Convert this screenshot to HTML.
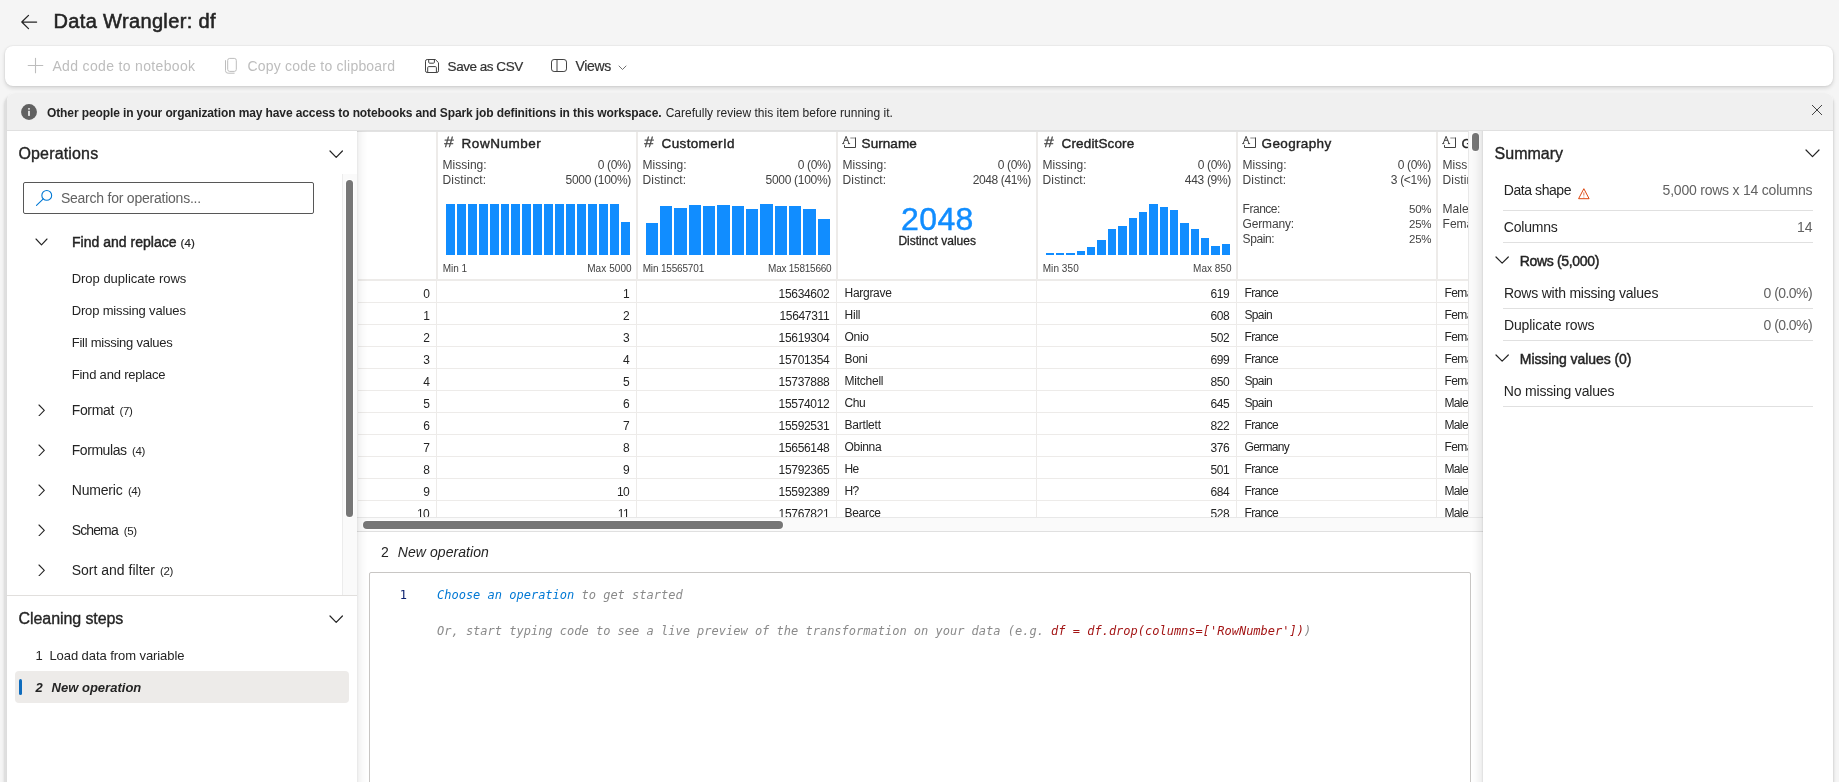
<!DOCTYPE html>
<html lang="en"><head><meta charset="utf-8"><title>Data Wrangler: df</title>
<style>
html,body{margin:0;padding:0;}
body{width:1839px;height:782px;overflow:hidden;background:#f5f5f5;position:relative;
font-family:"Liberation Sans",sans-serif;-webkit-font-smoothing:antialiased;}
.g{position:absolute;left:0;top:0;width:0;height:0;display:block;}
.b{position:absolute;display:block;box-sizing:border-box;}
.t{position:absolute;white-space:nowrap;line-height:1;display:block;}
</style></head><body>
<div class="b" style="left:0;top:0;width:1839px;height:782px;overflow:hidden;will-change:transform;">

<header class="g" aria-label="Data Wrangler header, toolbar and notice">
<svg class="b" style="left:19px;top:12px;" width="20" height="20" viewBox="0 0 20 20"><path d="M17.6 10 H2.9 M9.5 3.4 L2.8 10 L9.5 16.6" fill="none" stroke="#242424" stroke-width="1.25" stroke-linecap="round" stroke-linejoin="round"/></svg>
<span class="t" style="top:11px;font-size:20px;color:#242424;left:53.50px;letter-spacing:0.352px;-webkit-text-stroke:0.55px #242424;">Data Wrangler: df</span>
<div class="b" style="left:5px;top:46px;width:1828px;height:40px;background:#ffffff;border-radius:8px;box-shadow:0 0 2px rgba(0,0,0,.12),0 2px 4px rgba(0,0,0,.14);"></div>
<svg class="b" style="left:27px;top:57px;" width="17" height="17" viewBox="0 0 17 17"><path d="M8.5 1.2 V15.8 M1.2 8.5 H15.8" fill="none" stroke="#bdbdbd" stroke-width="1.1" stroke-linecap="round"/></svg>
<span class="t" style="top:59px;font-size:14px;color:#bdbdbd;left:52.40px;letter-spacing:0.341px;">Add code to notebook</span>
<svg class="b" style="left:224px;top:57px;" width="15" height="18" viewBox="0 0 15 18"><rect x="3.7" y="1.4" width="8.6" height="13" rx="2" fill="none" stroke="#bdbdbd" stroke-width="1"/><path d="M1.5 3.6 V13.6 a2.6 2.6 0 0 0 2.6 2.6 H10.2" fill="none" stroke="#bdbdbd" stroke-width="1" stroke-linecap="round"/></svg>
<span class="t" style="top:59px;font-size:14px;color:#bdbdbd;left:247.50px;letter-spacing:0.205px;">Copy code to clipboard</span>
<svg class="b" style="left:424px;top:58px;" width="16" height="16" viewBox="0 0 16 16"><path d="M1.5 3.2 a1.7 1.7 0 0 1 1.7 -1.7 H11.3 L14.5 4.7 V12.8 a1.7 1.7 0 0 1 -1.7 1.7 H3.2 a1.7 1.7 0 0 1 -1.7 -1.7 Z" fill="none" stroke="#424242" stroke-width="1" stroke-linejoin="round"/><path d="M4.7 1.5 V4.2 a1 1 0 0 0 1 1 H9.4 a1 1 0 0 0 1 -1 V1.5" fill="none" stroke="#424242" stroke-width="1"/><path d="M3.7 14.5 V9.6 a1 1 0 0 1 1 -1 H11.4 a1 1 0 0 1 1 1 V14.5" fill="none" stroke="#424242" stroke-width="1"/></svg>
<span class="t" style="top:60px;font-size:13.5px;color:#333333;left:447.60px;letter-spacing:-0.469px;-webkit-text-stroke:0.2px #333333;">Save as CSV</span>
<svg class="b" style="left:550px;top:58px;" width="18" height="16" viewBox="0 0 18 16"><rect x="1.5" y="1.5" width="15" height="12" rx="2.6" fill="none" stroke="#424242" stroke-width="1"/><path d="M7 1.6 V13.4" stroke="#424242" stroke-width="1"/></svg>
<span class="t" style="top:59px;font-size:14px;color:#333333;left:575.60px;letter-spacing:-0.373px;-webkit-text-stroke:0.2px #333333;">Views</span>
<svg class="b" style="left:617.5px;top:64.5px;" width="9" height="5.5" viewBox="0 0 9 5.5"><path d="M1 1 L4.5 4.5 L8 1" fill="none" stroke="#616161" stroke-width="0.9" stroke-linecap="round" stroke-linejoin="round"/></svg>
<div class="b" style="left:4px;top:95px;width:1830px;height:700px;background:#dfdfdf;border-radius:10px 9px 0 0;box-shadow:0 0 3px rgba(0,0,0,.13);"></div>
<div class="b" style="left:7px;top:93px;width:1826px;height:700px;background:#ffffff;border-radius:8px 8px 0 0;box-shadow:0 0 2px rgba(0,0,0,.03);"></div>
<div class="b" style="left:7px;top:93px;width:1826px;height:38px;background:#f0f0f0;border-radius:8px 8px 0 0;"></div>
<div class="b" style="left:7px;top:130px;width:1826px;height:1px;background:#e0e0e0;"></div>
<svg class="b" style="left:21px;top:104px;" width="16" height="16" viewBox="0 0 16 16"><circle cx="8" cy="8" r="7.95" fill="#616161"/><rect x="7" y="4.1" width="2" height="1.5" fill="#dcdcdc"/><rect x="7" y="6.8" width="2" height="5.1" fill="#dcdcdc"/></svg>
<span class="t" style="top:107px;font-size:12px;color:#242424;left:47.00px;font-weight:bold;letter-spacing:-0.109px;">Other people in your organization may have access to notebooks and Spark job definitions in this workspace.</span>
<span class="t" style="top:107px;font-size:12px;color:#242424;left:665.70px;letter-spacing:0.008px;">Carefully review this item before running it.</span>
<svg class="b" style="left:1811px;top:104px;" width="12" height="12" viewBox="0 0 12 12"><path d="M1.3 1.3 L10.7 10.7 M10.7 1.3 L1.3 10.7" fill="none" stroke="#424242" stroke-width="1" stroke-linecap="round"/></svg>
</header>
<main class="g" aria-label="Data grid">
<div class="b" style="left:357px;top:131px;width:1126px;height:386px;background:#ffffff;"></div>
<div class="b" style="left:358px;top:131px;width:1110px;height:386px;overflow:hidden;">
<div class="b" style="left:0px;top:148px;width:1110px;height:2px;background:#edebe9;"></div>
<div class="b" style="left:0px;top:171px;width:1110px;height:1px;background:#edebe9;"></div>
<div class="b" style="left:0px;top:193px;width:1110px;height:1px;background:#edebe9;"></div>
<div class="b" style="left:0px;top:215px;width:1110px;height:1px;background:#edebe9;"></div>
<div class="b" style="left:0px;top:237px;width:1110px;height:1px;background:#edebe9;"></div>
<div class="b" style="left:0px;top:259px;width:1110px;height:1px;background:#edebe9;"></div>
<div class="b" style="left:0px;top:281px;width:1110px;height:1px;background:#edebe9;"></div>
<div class="b" style="left:0px;top:303px;width:1110px;height:1px;background:#edebe9;"></div>
<div class="b" style="left:0px;top:325px;width:1110px;height:1px;background:#edebe9;"></div>
<div class="b" style="left:0px;top:347px;width:1110px;height:1px;background:#edebe9;"></div>
<div class="b" style="left:0px;top:369px;width:1110px;height:1px;background:#edebe9;"></div>
<div class="b" style="left:0px;top:391px;width:1110px;height:1px;background:#edebe9;"></div>
<div class="b" style="left:78px;top:0px;width:2px;height:150px;background:#edebe9;"></div>
<div class="b" style="left:78px;top:150px;width:1px;height:236px;background:#edebe9;"></div>
<div class="b" style="left:278px;top:0px;width:2px;height:150px;background:#edebe9;"></div>
<div class="b" style="left:278px;top:150px;width:1px;height:236px;background:#edebe9;"></div>
<div class="b" style="left:478px;top:0px;width:2px;height:150px;background:#edebe9;"></div>
<div class="b" style="left:478px;top:150px;width:1px;height:236px;background:#edebe9;"></div>
<div class="b" style="left:678px;top:0px;width:2px;height:150px;background:#edebe9;"></div>
<div class="b" style="left:678px;top:150px;width:1px;height:236px;background:#edebe9;"></div>
<div class="b" style="left:878px;top:0px;width:2px;height:150px;background:#edebe9;"></div>
<div class="b" style="left:878px;top:150px;width:1px;height:236px;background:#edebe9;"></div>
<div class="b" style="left:1078px;top:0px;width:2px;height:150px;background:#edebe9;"></div>
<div class="b" style="left:1078px;top:150px;width:1px;height:236px;background:#edebe9;"></div>
<span class="t" style="top:3px;font-size:15px;color:#424242;left:85.90px;-webkit-text-stroke:0.25px #424242;transform:scaleX(1.12) skewX(-3deg);transform-origin:0 100%;">#</span>
<span class="t" style="top:6px;font-size:13.5px;color:#242424;left:103.60px;letter-spacing:0.522px;-webkit-text-stroke:0.4px #242424;">RowNumber</span>
<span class="t" style="top:28px;font-size:12px;color:#424242;left:84.60px;letter-spacing:-0.001px;">Missing:</span>
<span class="t" style="top:43px;font-size:12px;color:#424242;left:84.60px;letter-spacing:0.103px;">Distinct:</span>
<span class="t" style="top:28px;font-size:12px;color:#424242;left:239.80px;letter-spacing:-0.369px;">0 (0%)</span>
<span class="t" style="top:43px;font-size:12px;color:#424242;left:207.50px;letter-spacing:-0.291px;">5000 (100%)</span>
<span class="t" style="top:3px;font-size:15px;color:#424242;left:285.90px;-webkit-text-stroke:0.25px #424242;transform:scaleX(1.12) skewX(-3deg);transform-origin:0 100%;">#</span>
<span class="t" style="top:6px;font-size:13.5px;color:#242424;left:303.60px;letter-spacing:0.347px;-webkit-text-stroke:0.4px #242424;">CustomerId</span>
<span class="t" style="top:28px;font-size:12px;color:#424242;left:284.60px;letter-spacing:-0.001px;">Missing:</span>
<span class="t" style="top:43px;font-size:12px;color:#424242;left:284.60px;letter-spacing:0.103px;">Distinct:</span>
<span class="t" style="top:28px;font-size:12px;color:#424242;left:439.80px;letter-spacing:-0.369px;">0 (0%)</span>
<span class="t" style="top:43px;font-size:12px;color:#424242;left:407.50px;letter-spacing:-0.291px;">5000 (100%)</span>
<svg class="b" style="left:484px;top:4px;" width="15" height="14" viewBox="0 0 15 14"><path d="M8.3 3 H13.5" fill="none" stroke="#8a8a8a" stroke-width="1"/><path d="M13.5 2.5 V12.5 H2.5 V10.1" fill="none" stroke="#424242" stroke-width="1" stroke-linejoin="miter"/><path d="M1.2 8.5 L4.1 1.3 L7 8.5 M2.4 5.3 H5.8" fill="none" stroke="#424242" stroke-width="1" stroke-linejoin="round" stroke-linecap="round"/><path d="M0.2 8.6 H2.3 M5.9 8.6 H8.1" fill="none" stroke="#424242" stroke-width="0.9"/></svg>
<span class="t" style="top:6px;font-size:13.5px;color:#242424;left:503.60px;letter-spacing:0.054px;-webkit-text-stroke:0.4px #242424;">Surname</span>
<span class="t" style="top:28px;font-size:12px;color:#424242;left:484.60px;letter-spacing:-0.001px;">Missing:</span>
<span class="t" style="top:43px;font-size:12px;color:#424242;left:484.60px;letter-spacing:0.103px;">Distinct:</span>
<span class="t" style="top:28px;font-size:12px;color:#424242;left:639.80px;letter-spacing:-0.369px;">0 (0%)</span>
<span class="t" style="top:43px;font-size:12px;color:#424242;left:614.70px;letter-spacing:-0.382px;">2048 (41%)</span>
<span class="t" style="top:3px;font-size:15px;color:#424242;left:685.90px;-webkit-text-stroke:0.25px #424242;transform:scaleX(1.12) skewX(-3deg);transform-origin:0 100%;">#</span>
<span class="t" style="top:6px;font-size:13.5px;color:#242424;left:703.60px;letter-spacing:0.132px;-webkit-text-stroke:0.4px #242424;">CreditScore</span>
<span class="t" style="top:28px;font-size:12px;color:#424242;left:684.60px;letter-spacing:-0.001px;">Missing:</span>
<span class="t" style="top:43px;font-size:12px;color:#424242;left:684.60px;letter-spacing:0.103px;">Distinct:</span>
<span class="t" style="top:28px;font-size:12px;color:#424242;left:839.80px;letter-spacing:-0.369px;">0 (0%)</span>
<span class="t" style="top:43px;font-size:12px;color:#424242;left:826.80px;letter-spacing:-0.313px;">443 (9%)</span>
<svg class="b" style="left:884px;top:4px;" width="15" height="14" viewBox="0 0 15 14"><path d="M8.3 3 H13.5" fill="none" stroke="#8a8a8a" stroke-width="1"/><path d="M13.5 2.5 V12.5 H2.5 V10.1" fill="none" stroke="#424242" stroke-width="1" stroke-linejoin="miter"/><path d="M1.2 8.5 L4.1 1.3 L7 8.5 M2.4 5.3 H5.8" fill="none" stroke="#424242" stroke-width="1" stroke-linejoin="round" stroke-linecap="round"/><path d="M0.2 8.6 H2.3 M5.9 8.6 H8.1" fill="none" stroke="#424242" stroke-width="0.9"/></svg>
<span class="t" style="top:6px;font-size:13.5px;color:#242424;left:903.60px;letter-spacing:0.351px;-webkit-text-stroke:0.4px #242424;">Geography</span>
<span class="t" style="top:28px;font-size:12px;color:#424242;left:884.60px;letter-spacing:-0.001px;">Missing:</span>
<span class="t" style="top:43px;font-size:12px;color:#424242;left:884.60px;letter-spacing:0.103px;">Distinct:</span>
<span class="t" style="top:28px;font-size:12px;color:#424242;left:1039.80px;letter-spacing:-0.369px;">0 (0%)</span>
<span class="t" style="top:43px;font-size:12px;color:#424242;left:1032.80px;letter-spacing:-0.309px;">3 (&lt;1%)</span>
<svg class="b" style="left:1084px;top:4px;" width="15" height="14" viewBox="0 0 15 14"><path d="M8.3 3 H13.5" fill="none" stroke="#8a8a8a" stroke-width="1"/><path d="M13.5 2.5 V12.5 H2.5 V10.1" fill="none" stroke="#424242" stroke-width="1" stroke-linejoin="miter"/><path d="M1.2 8.5 L4.1 1.3 L7 8.5 M2.4 5.3 H5.8" fill="none" stroke="#424242" stroke-width="1" stroke-linejoin="round" stroke-linecap="round"/><path d="M0.2 8.6 H2.3 M5.9 8.6 H8.1" fill="none" stroke="#424242" stroke-width="0.9"/></svg>
<span class="t" style="top:6px;font-size:13.5px;color:#242424;left:1103.60px;letter-spacing:0.394px;-webkit-text-stroke:0.4px #242424;">Gender</span>
<span class="t" style="top:28px;font-size:12px;color:#424242;left:1084.60px;letter-spacing:-0.001px;">Missing:</span>
<span class="t" style="top:43px;font-size:12px;color:#424242;left:1084.60px;letter-spacing:0.103px;">Distinct:</span>
<span class="t" style="top:28px;font-size:12px;color:#424242;left:1239.80px;letter-spacing:-0.369px;">0 (0%)</span>
<span class="t" style="top:43px;font-size:12px;color:#424242;left:1230.95px;">2 (&lt;1%)</span>
<svg class="b" style="left:88px;top:73px;" width="184" height="51" viewBox="0 0 184 51"><g fill="#118dff" shape-rendering="crispEdges"><rect x="0" y="0" width="9" height="51"/><rect x="11" y="0" width="9" height="51"/><rect x="22" y="0" width="9" height="51"/><rect x="33" y="0" width="9" height="51"/><rect x="44" y="0" width="9" height="51"/><rect x="55" y="0" width="8" height="51"/><rect x="65" y="0" width="9" height="51"/><rect x="76" y="0" width="9" height="51"/><rect x="87" y="0" width="9" height="51"/><rect x="98" y="0" width="9" height="51"/><rect x="109" y="0" width="9" height="51"/><rect x="120" y="0" width="9" height="51"/><rect x="131" y="0" width="9" height="51"/><rect x="142" y="0" width="9" height="51"/><rect x="153" y="0" width="9" height="51"/><rect x="164" y="0" width="9" height="51"/><rect x="175" y="18" width="9" height="33"/></g></svg>
<svg class="b" style="left:288px;top:73px;" width="184" height="51" viewBox="0 0 184 51"><g fill="#118dff" shape-rendering="crispEdges"><rect x="0" y="19" width="12" height="32"/><rect x="14" y="2" width="12" height="49"/><rect x="28" y="4" width="13" height="47"/><rect x="43" y="1" width="12" height="50"/><rect x="57" y="2" width="12" height="49"/><rect x="71" y="1" width="13" height="50"/><rect x="86" y="2" width="12" height="49"/><rect x="100" y="5" width="12" height="46"/><rect x="114" y="0" width="13" height="51"/><rect x="129" y="2" width="12" height="49"/><rect x="143" y="2" width="12" height="49"/><rect x="157" y="5" width="13" height="46"/><rect x="172" y="15" width="12" height="36"/></g></svg>
<svg class="b" style="left:688px;top:73px;" width="184" height="51" viewBox="0 0 184 51"><g fill="#118dff" shape-rendering="crispEdges"><rect x="0" y="49" width="8" height="2"/><rect x="10" y="49" width="8" height="2"/><rect x="20" y="49" width="9" height="2"/><rect x="31" y="47" width="8" height="4"/><rect x="41" y="43" width="8" height="8"/><rect x="51" y="36" width="9" height="15"/><rect x="62" y="25" width="8" height="26"/><rect x="72" y="22" width="9" height="29"/><rect x="83" y="14" width="8" height="37"/><rect x="93" y="8" width="8" height="43"/><rect x="103" y="0" width="9" height="51"/><rect x="114" y="3" width="8" height="48"/><rect x="124" y="6" width="8" height="45"/><rect x="134" y="19" width="9" height="32"/><rect x="145" y="25" width="8" height="26"/><rect x="155" y="34" width="8" height="17"/><rect x="165" y="42" width="9" height="9"/><rect x="176" y="40" width="8" height="11"/></g></svg>
<span class="t" style="top:133px;font-size:10px;color:#424242;left:84.70px;letter-spacing:-0.013px;">Min 1</span>
<span class="t" style="top:133px;font-size:10px;color:#424242;left:229.20px;letter-spacing:0.069px;">Max 5000</span>
<span class="t" style="top:133px;font-size:10px;color:#424242;left:284.70px;letter-spacing:-0.171px;">Min 15565701</span>
<span class="t" style="top:133px;font-size:10px;color:#424242;left:410.10px;letter-spacing:-0.242px;">Max 15815660</span>
<span class="t" style="top:133px;font-size:10px;color:#424242;left:684.70px;letter-spacing:0.071px;">Min 350</span>
<span class="t" style="top:133px;font-size:10px;color:#424242;left:835.10px;letter-spacing:0.024px;">Max 850</span>
<span class="t" style="top:72px;font-size:32px;color:#118dff;left:543.00px;letter-spacing:0.404px;-webkit-text-stroke:0.45px #118dff;">2048</span>
<span class="t" style="top:104px;font-size:12px;color:#242424;left:540.40px;letter-spacing:0.017px;-webkit-text-stroke:0.3px #242424;">Distinct values</span>
<span class="t" style="top:72px;font-size:12px;color:#424242;left:884.60px;letter-spacing:-0.480px;">France:</span>
<span class="t" style="top:73px;font-size:11.5px;color:#424242;left:1051.00px;letter-spacing:-0.258px;">50%</span>
<span class="t" style="top:87px;font-size:12px;color:#424242;left:884.60px;letter-spacing:-0.169px;">Germany:</span>
<span class="t" style="top:88px;font-size:11.5px;color:#424242;left:1051.00px;letter-spacing:-0.258px;">25%</span>
<span class="t" style="top:102px;font-size:12px;color:#424242;left:884.60px;letter-spacing:-0.385px;">Spain:</span>
<span class="t" style="top:103px;font-size:11.5px;color:#424242;left:1051.00px;letter-spacing:-0.258px;">25%</span>
<span class="t" style="top:72px;font-size:12px;color:#424242;left:1084.60px;">Male:</span>
<span class="t" style="top:87px;font-size:12px;color:#424242;left:1084.60px;">Female:</span>
<span class="t" style="top:157px;font-size:12px;color:#242424;left:65.13px;">0</span>
<span class="t" style="top:157px;font-size:12px;color:#242424;left:265.03px;">1</span>
<span class="t" style="top:157px;font-size:12px;color:#242424;left:420.60px;letter-spacing:-0.328px;">15634602</span>
<span class="t" style="top:156px;font-size:12px;color:#242424;left:486.60px;letter-spacing:-0.303px;">Hargrave</span>
<span class="t" style="top:157px;font-size:12px;color:#242424;left:852.54px;letter-spacing:-0.430px;">619</span>
<span class="t" style="top:156px;font-size:12px;color:#242424;left:886.50px;letter-spacing:-0.635px;">France</span>
<span class="t" style="top:156px;font-size:12px;color:#242424;left:1086.40px;letter-spacing:-0.560px;">Female</span>
<span class="t" style="top:179px;font-size:12px;color:#242424;left:65.13px;">1</span>
<span class="t" style="top:179px;font-size:12px;color:#242424;left:265.03px;">2</span>
<span class="t" style="top:179px;font-size:12px;color:#242424;left:421.46px;letter-spacing:-0.323px;">15647311</span>
<span class="t" style="top:178px;font-size:12px;color:#242424;left:486.60px;letter-spacing:-0.239px;">Hill</span>
<span class="t" style="top:179px;font-size:12px;color:#242424;left:852.54px;letter-spacing:-0.430px;">608</span>
<span class="t" style="top:178px;font-size:12px;color:#242424;left:886.50px;letter-spacing:-0.652px;">Spain</span>
<span class="t" style="top:178px;font-size:12px;color:#242424;left:1086.40px;letter-spacing:-0.560px;">Female</span>
<span class="t" style="top:201px;font-size:12px;color:#242424;left:65.13px;">2</span>
<span class="t" style="top:201px;font-size:12px;color:#242424;left:265.03px;">3</span>
<span class="t" style="top:201px;font-size:12px;color:#242424;left:420.60px;letter-spacing:-0.328px;">15619304</span>
<span class="t" style="top:200px;font-size:12px;color:#242424;left:486.60px;letter-spacing:-0.363px;">Onio</span>
<span class="t" style="top:201px;font-size:12px;color:#242424;left:852.54px;letter-spacing:-0.430px;">502</span>
<span class="t" style="top:200px;font-size:12px;color:#242424;left:886.50px;letter-spacing:-0.635px;">France</span>
<span class="t" style="top:200px;font-size:12px;color:#242424;left:1086.40px;letter-spacing:-0.560px;">Female</span>
<span class="t" style="top:223px;font-size:12px;color:#242424;left:65.13px;">3</span>
<span class="t" style="top:223px;font-size:12px;color:#242424;left:265.03px;">4</span>
<span class="t" style="top:223px;font-size:12px;color:#242424;left:420.60px;letter-spacing:-0.328px;">15701354</span>
<span class="t" style="top:222px;font-size:12px;color:#242424;left:486.60px;letter-spacing:-0.344px;">Boni</span>
<span class="t" style="top:223px;font-size:12px;color:#242424;left:852.54px;letter-spacing:-0.430px;">699</span>
<span class="t" style="top:222px;font-size:12px;color:#242424;left:886.50px;letter-spacing:-0.635px;">France</span>
<span class="t" style="top:222px;font-size:12px;color:#242424;left:1086.40px;letter-spacing:-0.560px;">Female</span>
<span class="t" style="top:245px;font-size:12px;color:#242424;left:65.13px;">4</span>
<span class="t" style="top:245px;font-size:12px;color:#242424;left:265.03px;">5</span>
<span class="t" style="top:245px;font-size:12px;color:#242424;left:420.60px;letter-spacing:-0.328px;">15737888</span>
<span class="t" style="top:244px;font-size:12px;color:#242424;left:486.60px;letter-spacing:-0.250px;">Mitchell</span>
<span class="t" style="top:245px;font-size:12px;color:#242424;left:852.54px;letter-spacing:-0.430px;">850</span>
<span class="t" style="top:244px;font-size:12px;color:#242424;left:886.50px;letter-spacing:-0.652px;">Spain</span>
<span class="t" style="top:244px;font-size:12px;color:#242424;left:1086.40px;letter-spacing:-0.560px;">Female</span>
<span class="t" style="top:267px;font-size:12px;color:#242424;left:65.13px;">5</span>
<span class="t" style="top:267px;font-size:12px;color:#242424;left:265.03px;">6</span>
<span class="t" style="top:267px;font-size:12px;color:#242424;left:420.60px;letter-spacing:-0.328px;">15574012</span>
<span class="t" style="top:266px;font-size:12px;color:#242424;left:486.60px;letter-spacing:-0.473px;">Chu</span>
<span class="t" style="top:267px;font-size:12px;color:#242424;left:852.54px;letter-spacing:-0.430px;">645</span>
<span class="t" style="top:266px;font-size:12px;color:#242424;left:886.50px;letter-spacing:-0.652px;">Spain</span>
<span class="t" style="top:266px;font-size:12px;color:#242424;left:1086.40px;letter-spacing:-0.607px;">Male</span>
<span class="t" style="top:289px;font-size:12px;color:#242424;left:65.13px;">6</span>
<span class="t" style="top:289px;font-size:12px;color:#242424;left:265.03px;">7</span>
<span class="t" style="top:289px;font-size:12px;color:#242424;left:420.60px;letter-spacing:-0.328px;">15592531</span>
<span class="t" style="top:288px;font-size:12px;color:#242424;left:486.60px;letter-spacing:-0.234px;">Bartlett</span>
<span class="t" style="top:289px;font-size:12px;color:#242424;left:852.54px;letter-spacing:-0.430px;">822</span>
<span class="t" style="top:288px;font-size:12px;color:#242424;left:886.50px;letter-spacing:-0.635px;">France</span>
<span class="t" style="top:288px;font-size:12px;color:#242424;left:1086.40px;letter-spacing:-0.607px;">Male</span>
<span class="t" style="top:311px;font-size:12px;color:#242424;left:65.13px;">7</span>
<span class="t" style="top:311px;font-size:12px;color:#242424;left:265.03px;">8</span>
<span class="t" style="top:311px;font-size:12px;color:#242424;left:420.60px;letter-spacing:-0.328px;">15656148</span>
<span class="t" style="top:310px;font-size:12px;color:#242424;left:486.60px;letter-spacing:-0.333px;">Obinna</span>
<span class="t" style="top:311px;font-size:12px;color:#242424;left:852.54px;letter-spacing:-0.430px;">376</span>
<span class="t" style="top:310px;font-size:12px;color:#242424;left:886.50px;letter-spacing:-0.699px;">Germany</span>
<span class="t" style="top:310px;font-size:12px;color:#242424;left:1086.40px;letter-spacing:-0.560px;">Female</span>
<span class="t" style="top:333px;font-size:12px;color:#242424;left:65.13px;">8</span>
<span class="t" style="top:333px;font-size:12px;color:#242424;left:265.03px;">9</span>
<span class="t" style="top:333px;font-size:12px;color:#242424;left:420.60px;letter-spacing:-0.328px;">15792365</span>
<span class="t" style="top:332px;font-size:12px;color:#242424;left:486.60px;letter-spacing:-0.660px;">He</span>
<span class="t" style="top:333px;font-size:12px;color:#242424;left:852.54px;letter-spacing:-0.430px;">501</span>
<span class="t" style="top:332px;font-size:12px;color:#242424;left:886.50px;letter-spacing:-0.635px;">France</span>
<span class="t" style="top:332px;font-size:12px;color:#242424;left:1086.40px;letter-spacing:-0.607px;">Male</span>
<span class="t" style="top:355px;font-size:12px;color:#242424;left:65.13px;">9</span>
<span class="t" style="top:355px;font-size:12px;color:#242424;left:258.93px;letter-spacing:-0.574px;">10</span>
<span class="t" style="top:355px;font-size:12px;color:#242424;left:420.60px;letter-spacing:-0.328px;">15592389</span>
<span class="t" style="top:354px;font-size:12px;color:#242424;left:486.60px;letter-spacing:-0.660px;">H?</span>
<span class="t" style="top:355px;font-size:12px;color:#242424;left:852.54px;letter-spacing:-0.430px;">684</span>
<span class="t" style="top:354px;font-size:12px;color:#242424;left:886.50px;letter-spacing:-0.635px;">France</span>
<span class="t" style="top:354px;font-size:12px;color:#242424;left:1086.40px;letter-spacing:-0.607px;">Male</span>
<span class="t" style="top:377px;font-size:12px;color:#242424;left:59.03px;letter-spacing:-0.574px;">10</span>
<span class="t" style="top:377px;font-size:12px;color:#242424;left:259.78px;letter-spacing:-0.536px;">11</span>
<span class="t" style="top:377px;font-size:12px;color:#242424;left:420.60px;letter-spacing:-0.328px;">15767821</span>
<span class="t" style="top:376px;font-size:12px;color:#242424;left:486.60px;letter-spacing:-0.327px;">Bearce</span>
<span class="t" style="top:377px;font-size:12px;color:#242424;left:852.54px;letter-spacing:-0.430px;">528</span>
<span class="t" style="top:376px;font-size:12px;color:#242424;left:886.50px;letter-spacing:-0.635px;">France</span>
<span class="t" style="top:376px;font-size:12px;color:#242424;left:1086.40px;letter-spacing:-0.607px;">Male</span>
</div>
<div class="b" style="left:357px;top:131px;width:1126px;height:1px;background:#e2e2e2;"></div>
<div class="b" style="left:1468px;top:131px;width:15px;height:386px;background:#fafafa;border-left:1px solid #e8e8e8;"></div>
<div class="b" style="left:1472px;top:133px;width:7px;height:18px;background:#777777;border-radius:3.5px;box-shadow:0 0 0 1px #ffffff;"></div>
<div class="b" style="left:357px;top:517px;width:1126px;height:14px;background:#fafafa;border-top:1px solid #e8e8e8;"></div>
<div class="b" style="left:363.2px;top:521px;width:419.7px;height:8px;background:#777777;border-radius:4px;box-shadow:0 0 0 1px #ffffff;"></div>
<div class="b" style="left:357px;top:531px;width:1126px;height:1px;background:#e0e0e0;"></div>
</main>
<section class="g" aria-label="Code editor">
<div class="b" style="left:357px;top:532px;width:1126px;height:250px;background:#ffffff;"></div>
<span class="t" style="top:545px;font-size:14px;color:#242424;left:381.00px;">2</span>
<span class="t" style="top:545px;font-size:14px;color:#242424;left:397.80px;font-style:italic;letter-spacing:0.060px;">New operation</span>
<div class="b" style="left:369px;top:572px;width:1102px;height:215px;background:#ffffff;border:1px solid #c8c6c4;border-radius:2px;"></div>
<span class="t" style="top:589px;font-size:12px;color:#0b216f;left:399.80px;font-family:'DejaVu Sans Mono','Liberation Mono',monospace;">1</span>
<span class="t" style="top:589px;font-size:12px;color:#0078d4;left:437.00px;font-style:italic;font-family:'DejaVu Sans Mono','Liberation Mono',monospace;">Choose an operation</span>
<span class="t" style="top:589px;font-size:12px;color:#8a8a8a;left:581.49px;font-style:italic;font-family:'DejaVu Sans Mono','Liberation Mono',monospace;">to get started</span>
<span class="t" style="top:625px;font-size:12px;color:#8a8a8a;left:437.00px;font-style:italic;font-family:'DejaVu Sans Mono','Liberation Mono',monospace;white-space:pre;">Or, start typing code to see a live preview of the transformation on your data (e.g. </span>
<span class="t" style="top:625px;font-size:12px;color:#a31515;left:1051.09px;font-style:italic;font-family:'DejaVu Sans Mono','Liberation Mono',monospace;">df = df.drop(columns=['RowNumber'])</span>
<span class="t" style="top:625px;font-size:12px;color:#8a8a8a;left:1303.95px;font-style:italic;font-family:'DejaVu Sans Mono','Liberation Mono',monospace;">)</span>
</section>
<aside class="g" aria-label="Operations and cleaning steps">
<div class="b" style="left:7px;top:131px;width:350px;height:651px;background:#ffffff;"></div>
<div class="b" style="left:357px;top:131px;width:11px;height:651px;background:linear-gradient(to right,rgba(0,0,0,.10) 0,rgba(0,0,0,.065) 1px,rgba(0,0,0,.045) 2px,rgba(0,0,0,.03) 4px,rgba(0,0,0,.012) 7px,rgba(0,0,0,0) 11px);"></div>
<span class="t" style="top:146px;font-size:16px;color:#242424;left:18.40px;letter-spacing:0.170px;-webkit-text-stroke:0.35px #242424;">Operations</span>
<svg class="b" style="left:328.9px;top:149.6px;" width="14.4" height="8.3" viewBox="0 0 14.4 8.3"><path d="M1 1 L7.2 7.3 L13.4 1" fill="none" stroke="#242424" stroke-width="1.2" stroke-linecap="round" stroke-linejoin="round"/></svg>
<div class="b" style="left:23px;top:182px;width:291px;height:32px;background:#ffffff;border:1px solid #575757;border-radius:2px;"></div>
<svg class="b" style="left:35px;top:189px;" width="18" height="18" viewBox="0 0 18 18"><circle cx="11.75" cy="6.4" r="4.9" fill="none" stroke="#0078d4" stroke-width="1.1"/><path d="M8.3 9.9 L1.5 16.4" stroke="#0078d4" stroke-width="1.1" stroke-linecap="round"/></svg>
<span class="t" style="top:191px;font-size:14px;color:#616161;left:60.90px;letter-spacing:-0.231px;">Search for operations...</span>
<div class="b" style="left:342px;top:174px;width:15px;height:421px;background:#fafafa;border-left:1px solid #ececec;"></div>
<div class="b" style="left:346px;top:180px;width:7px;height:337px;background:#777777;border-radius:3.5px;box-shadow:0 0 0 1px #ffffff;"></div>
<svg class="b" style="left:34.8px;top:238.3px;" width="13" height="7.8" viewBox="0 0 13 7.8"><path d="M1 1 L6.5 6.8 L12 1" fill="none" stroke="#242424" stroke-width="1.1" stroke-linecap="round" stroke-linejoin="round"/></svg>
<span class="t" style="top:235px;font-size:14px;color:#242424;left:72.00px;letter-spacing:0.014px;-webkit-text-stroke:0.45px #242424;">Find and replace</span>
<span class="t" style="top:238px;font-size:11.5px;color:#242424;left:180.60px;letter-spacing:0.072px;-webkit-text-stroke:0.2px #242424;">(4)</span>
<span class="t" style="top:272px;font-size:13px;color:#242424;left:71.70px;letter-spacing:-0.016px;">Drop duplicate rows</span>
<span class="t" style="top:304px;font-size:13px;color:#242424;left:71.70px;letter-spacing:-0.158px;">Drop missing values</span>
<span class="t" style="top:336px;font-size:13px;color:#242424;left:71.70px;letter-spacing:-0.243px;">Fill missing values</span>
<span class="t" style="top:368px;font-size:13px;color:#242424;left:71.70px;letter-spacing:-0.196px;">Find and replace</span>
<svg class="b" style="left:37.7px;top:403.7px;" width="7.3" height="12.8" viewBox="0 0 7.3 12.8"><path d="M1 1 L6.3 6.4 L1 11.8" fill="none" stroke="#242424" stroke-width="1.1" stroke-linecap="round" stroke-linejoin="round"/></svg>
<span class="t" style="top:403px;font-size:14px;color:#242424;left:71.70px;letter-spacing:-0.328px;">Format</span>
<span class="t" style="top:406px;font-size:11.5px;color:#242424;left:119.50px;letter-spacing:-0.378px;">(7)</span>
<svg class="b" style="left:37.7px;top:443.7px;" width="7.3" height="12.8" viewBox="0 0 7.3 12.8"><path d="M1 1 L6.3 6.4 L1 11.8" fill="none" stroke="#242424" stroke-width="1.1" stroke-linecap="round" stroke-linejoin="round"/></svg>
<span class="t" style="top:443px;font-size:14px;color:#242424;left:71.70px;letter-spacing:-0.435px;">Formulas</span>
<span class="t" style="top:446px;font-size:11.5px;color:#242424;left:132.10px;letter-spacing:-0.378px;">(4)</span>
<svg class="b" style="left:37.7px;top:483.7px;" width="7.3" height="12.8" viewBox="0 0 7.3 12.8"><path d="M1 1 L6.3 6.4 L1 11.8" fill="none" stroke="#242424" stroke-width="1.1" stroke-linecap="round" stroke-linejoin="round"/></svg>
<span class="t" style="top:483px;font-size:14px;color:#242424;left:71.70px;letter-spacing:-0.170px;">Numeric</span>
<span class="t" style="top:486px;font-size:11.5px;color:#242424;left:127.90px;letter-spacing:-0.378px;">(4)</span>
<svg class="b" style="left:37.7px;top:523.7px;" width="7.3" height="12.8" viewBox="0 0 7.3 12.8"><path d="M1 1 L6.3 6.4 L1 11.8" fill="none" stroke="#242424" stroke-width="1.1" stroke-linecap="round" stroke-linejoin="round"/></svg>
<span class="t" style="top:523px;font-size:14px;color:#242424;left:71.70px;letter-spacing:-0.872px;">Schema</span>
<span class="t" style="top:526px;font-size:11.5px;color:#242424;left:123.80px;letter-spacing:-0.378px;">(5)</span>
<svg class="b" style="left:37.7px;top:563.7px;" width="7.3" height="12.8" viewBox="0 0 7.3 12.8"><path d="M1 1 L6.3 6.4 L1 11.8" fill="none" stroke="#242424" stroke-width="1.1" stroke-linecap="round" stroke-linejoin="round"/></svg>
<span class="t" style="top:563px;font-size:14px;color:#242424;left:71.70px;letter-spacing:0.003px;">Sort and filter</span>
<span class="t" style="top:566px;font-size:11.5px;color:#242424;left:160.10px;letter-spacing:-0.378px;">(2)</span>
<div class="b" style="left:7px;top:595px;width:350px;height:1px;background:#e1dfdd;"></div>
<span class="t" style="top:611px;font-size:16px;color:#242424;left:18.60px;letter-spacing:-0.088px;-webkit-text-stroke:0.35px #242424;">Cleaning steps</span>
<svg class="b" style="left:328.9px;top:614.7px;" width="14.4" height="8.3" viewBox="0 0 14.4 8.3"><path d="M1 1 L7.2 7.3 L13.4 1" fill="none" stroke="#242424" stroke-width="1.2" stroke-linecap="round" stroke-linejoin="round"/></svg>
<span class="t" style="top:649px;font-size:13px;color:#242424;left:35.40px;">1</span>
<span class="t" style="top:649px;font-size:13px;color:#242424;left:49.40px;letter-spacing:-0.067px;">Load data from variable</span>
<div class="b" style="left:15.3px;top:671px;width:334px;height:32px;background:#edebe9;border-radius:4px;"></div>
<div class="b" style="left:19px;top:679px;width:3px;height:16px;background:#0f6cbd;border-radius:1.5px;"></div>
<span class="t" style="top:681px;font-size:13px;color:#242424;left:35.40px;font-weight:bold;font-style:italic;">2</span>
<span class="t" style="top:681px;font-size:13px;color:#242424;left:51.50px;font-weight:bold;font-style:italic;letter-spacing:0.020px;">New operation</span>
</aside>
<aside class="g" aria-label="Summary">
<div class="b" style="left:1483px;top:131px;width:350px;height:651px;background:#ffffff;"></div>
<div class="b" style="left:1471px;top:131px;width:12px;height:651px;background:linear-gradient(to left,rgba(0,0,0,.14) 0,rgba(0,0,0,.075) 1px,rgba(0,0,0,.055) 2px,rgba(0,0,0,.035) 5px,rgba(0,0,0,.012) 8px,rgba(0,0,0,0) 12px);"></div>
<span class="t" style="top:146px;font-size:16px;color:#242424;left:1494.60px;letter-spacing:-0.009px;-webkit-text-stroke:0.35px #242424;">Summary</span>
<svg class="b" style="left:1804.5px;top:149.3px;" width="15" height="8.6" viewBox="0 0 15 8.6"><path d="M1 1 L7.5 7.6 L14 1" fill="none" stroke="#242424" stroke-width="1.2" stroke-linecap="round" stroke-linejoin="round"/></svg>
<span class="t" style="top:183px;font-size:14px;color:#242424;left:1503.80px;letter-spacing:-0.434px;">Data shape</span>
<svg class="b" style="left:1577px;top:187px;" width="14" height="13" viewBox="0 0 14 13"><path d="M6.85 1.7 L12.1 11.7 H1.6 Z" fill="none" stroke="#da3b01" stroke-width="0.95" stroke-linejoin="round"/><path d="M6.85 5.4 V8.6" stroke="#da3b01" stroke-width="0.9" stroke-opacity="0.75"/><circle cx="6.85" cy="10" r="0.5" fill="#da3b01" fill-opacity="0.75"/></svg>
<span class="t" style="top:183px;font-size:14px;color:#616161;left:1662.60px;letter-spacing:-0.221px;">5,000 rows x 14 columns</span>
<div class="b" style="left:1503px;top:210px;width:310px;height:1px;background:#e0e0e0;"></div>
<span class="t" style="top:220px;font-size:14px;color:#242424;left:1503.80px;letter-spacing:-0.207px;">Columns</span>
<span class="t" style="top:220px;font-size:14px;color:#616161;left:1797.03px;">14</span>
<div class="b" style="left:1503px;top:242px;width:310px;height:1px;background:#e0e0e0;"></div>
<svg class="b" style="left:1495px;top:255.8px;" width="14.3" height="8.1" viewBox="0 0 14.3 8.1"><path d="M1 1 L7.15 7.1 L13.3 1" fill="none" stroke="#242424" stroke-width="1.2" stroke-linecap="round" stroke-linejoin="round"/></svg>
<span class="t" style="top:254px;font-size:14px;color:#242424;left:1519.80px;letter-spacing:-0.341px;-webkit-text-stroke:0.45px #242424;">Rows (5,000)</span>
<span class="t" style="top:286px;font-size:14px;color:#242424;left:1503.90px;letter-spacing:-0.217px;">Rows with missing values</span>
<span class="t" style="top:286px;font-size:14px;color:#616161;left:1763.60px;letter-spacing:-0.559px;">0 (0.0%)</span>
<div class="b" style="left:1503px;top:308px;width:310px;height:1px;background:#e0e0e0;"></div>
<span class="t" style="top:318px;font-size:14px;color:#242424;left:1503.90px;letter-spacing:-0.101px;">Duplicate rows</span>
<span class="t" style="top:318px;font-size:14px;color:#616161;left:1763.60px;letter-spacing:-0.559px;">0 (0.0%)</span>
<div class="b" style="left:1503px;top:340px;width:310px;height:1px;background:#e0e0e0;"></div>
<svg class="b" style="left:1495px;top:353.8px;" width="14.3" height="8.1" viewBox="0 0 14.3 8.1"><path d="M1 1 L7.15 7.1 L13.3 1" fill="none" stroke="#242424" stroke-width="1.2" stroke-linecap="round" stroke-linejoin="round"/></svg>
<span class="t" style="top:352px;font-size:14px;color:#242424;left:1519.80px;letter-spacing:-0.071px;-webkit-text-stroke:0.45px #242424;">Missing values (0)</span>
<span class="t" style="top:384px;font-size:14px;color:#242424;left:1503.80px;letter-spacing:-0.188px;">No missing values</span>
<div class="b" style="left:1503px;top:406px;width:310px;height:1px;background:#e0e0e0;"></div>
</aside>
</div>
</body></html>
